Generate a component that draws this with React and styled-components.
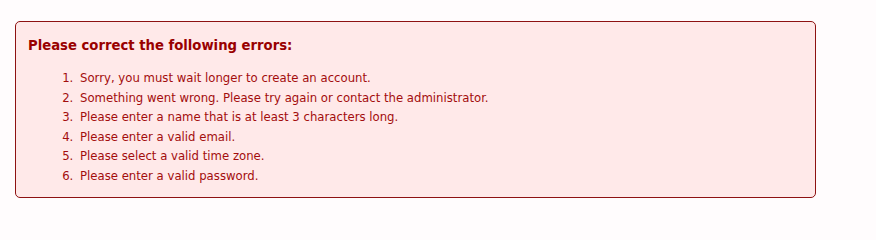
import React from "react";
import styled, { createGlobalStyle } from "styled-components";

const GlobalStyle = createGlobalStyle`
  body {
    margin: 0;
    background: #fffcfd;
    font-family: "DejaVu Sans Condensed", "DejaVu Sans", sans-serif;
  }
`;

const Page = styled.div`
  padding: 21px 0 0 15px;
`;

const ErrorBox = styled.div`
  box-sizing: border-box;
  width: 801px;
  height: 177px;
  padding: 14px 12px 0 12px;
  background: #ffe9e9;
  border: 1px solid #8e1212;
  border-radius: 5px;
  color: #a30d0d;
`;

const Title = styled.h3`
  margin: 0 0 15px 0;
  font-size: 14.7px;
  font-weight: bold;
  color: #990000;
`;

const ErrorList = styled.ol`
  margin: 0;
  padding-left: 49px;
  font-size: 13px;
  line-height: 19.5px;
  li {
    padding-left: 3px;
  }
`;

const errors = [
  "Sorry, you must wait longer to create an account.",
  "Something went wrong. Please try again or contact the administrator.",
  "Please enter a name that is at least 3 characters long.",
  "Please enter a valid email.",
  "Please select a valid time zone.",
  "Please enter a valid password.",
];

export default function App() {
  return (
    <Page>
      <GlobalStyle />
      <ErrorBox>
        <Title>Please correct the following errors:</Title>
        <ErrorList>
          {errors.map((e) => (
            <li key={e}>{e}</li>
          ))}
        </ErrorList>
      </ErrorBox>
    </Page>
  );
}
